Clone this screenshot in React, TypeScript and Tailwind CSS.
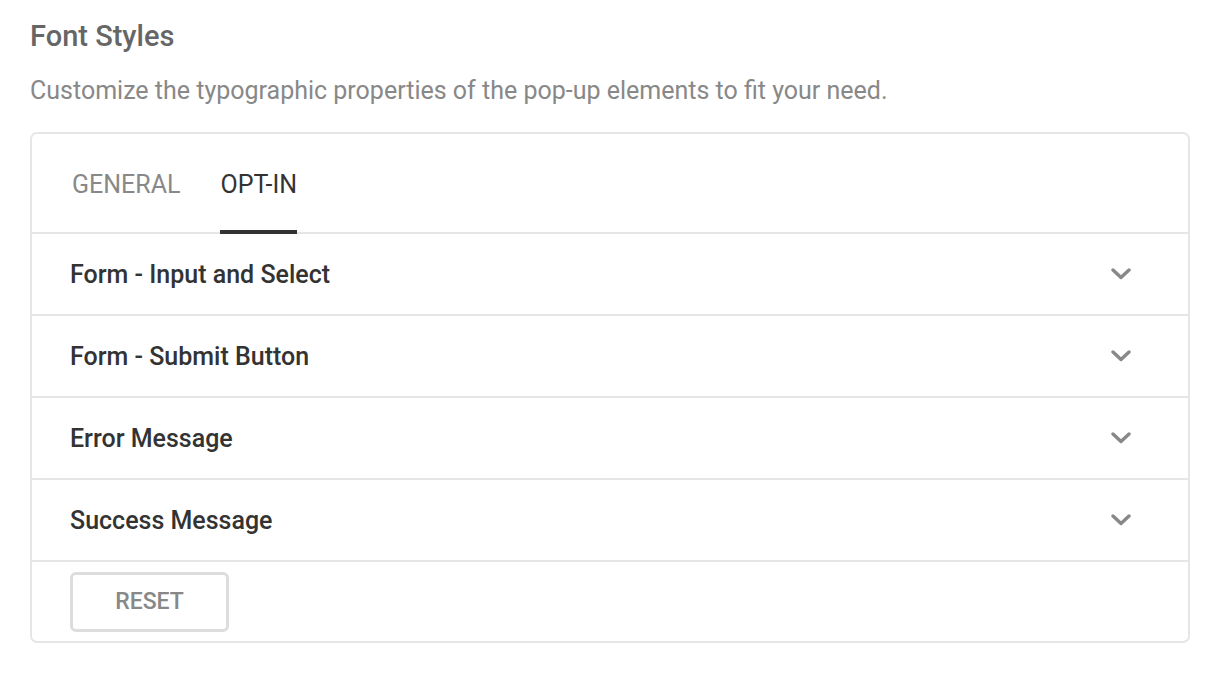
import React, { useState } from "react";

const rows = [
  "Form - Input and Select",
  "Form - Submit Button",
  "Error Message",
  "Success Message",
];

function Chevron() {
  return (
    <svg width="20" height="12" viewBox="0 0 20 12" fill="none">
      <path d="M2 2 L10 9.5 L18 2" stroke="#888888" strokeWidth="3.4" strokeLinecap="round" strokeLinejoin="round" />
    </svg>
  );
}

export default function App() {
  const [tab, setTab] = useState("OPT-IN");
  return (
    <div className="w-[1220px] h-[674px] bg-white px-[30px] pt-[17px]" style={{ fontFamily: "Roboto, 'Noto Sans', sans-serif" }}>
      <h2 className="text-[29px] leading-[38px] font-medium text-[#666666]">Font Styles</h2>
      <p className="mt-[19px] text-[25px] leading-[34px] text-[#888888]">
        Customize the typographic properties of the pop-up elements to fit your need.
      </p>
      <div className="mt-[24px] w-[1160px] border-2 border-[#e6e6e6] rounded-[7px]">
        <div className="flex gap-[40px] pl-[40px] h-[100px] border-b-2 border-[#e6e6e6]">
          {["GENERAL", "OPT-IN"].map((t) => (
            <button
              key={t}
              onClick={() => setTab(t)}
              className={`relative flex items-center pt-[4px] text-[25px] leading-[32px] ${t === tab ? "text-[#333333]" : "text-[#888888]"}`}
            >
              {t}
              {t === tab && <span className="absolute left-0 right-0 bottom-[-2px] h-[4px] bg-[#333333]" />}
            </button>
          ))}
        </div>
        {rows.map((r) => (
          <div key={r} className="flex items-center justify-between h-[82px] pl-[38px] pr-[57px] border-b-2 border-[#e6e6e6]">
            <span className="text-[25px] leading-[32px] font-medium text-[#333333] pt-[1px]">{r}</span>
            <span className="-mt-[1px]"><Chevron /></span>
          </div>
        ))}
        <div className="pl-[38px] pt-[10px] pb-[9px]">
          <button className="w-[159px] h-[60px] border-[3px] border-[#dddddd] rounded-[6px] pt-[1px] text-[23px] font-medium text-[#888888] flex items-center justify-center">
            RESET
          </button>
        </div>
      </div>
    </div>
  );
}
